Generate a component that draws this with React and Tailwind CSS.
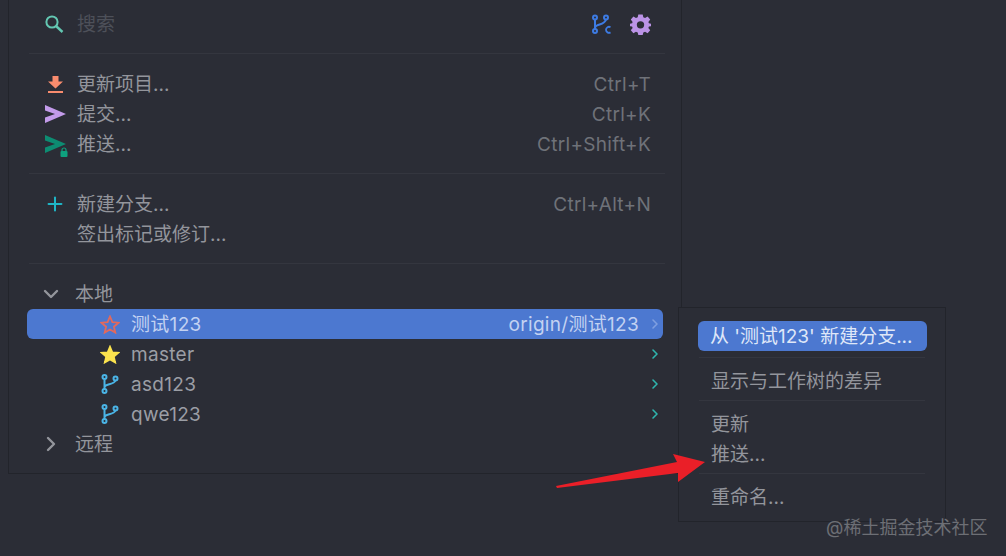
import React from 'react';
import { ChevronDown, ChevronRight, Plus } from 'lucide-react';

function SearchIcon() {
  return (
    <svg width="19" height="18" viewBox="0 0 19 18" fill="none" stroke="#63c7b2" strokeWidth="2">
      <circle cx="7" cy="7" r="5.6" />
      <path d="M11 11 L17.5 17" strokeWidth="2.4" />
    </svg>
  );
}

function Arrow({ className }) {
  return (
    <svg width="21" height="18" viewBox="0 0 21 18" className={className}>
      <path d="M0 0 L21 9 L0 18 V12.5 L10 9 L0 5.5 Z" fill="currentColor" />
    </svg>
  );
}

function UpdateIcon() {
  return (
    <svg width="15" height="17" viewBox="0 0 15 17" className="text-[#f98c6e] ml-[3px]">
      <path d="M4.5 0 H10.5 V5.5 H15 L7.5 12.5 L0 5.5 H4.5 Z" fill="currentColor" />
      <rect x="0" y="15" width="15" height="2" fill="currentColor" />
    </svg>
  );
}

function PushIcon() {
  return (
    <span className="relative flex w-[22px] h-[18px] text-[#0d8c72]">
      <Arrow />
      <svg width="8" height="10" viewBox="0 0 8 10" className="absolute left-[15px] top-[12px] text-[#0ea17e]">
        <path d="M2 4 V3 a2 2 0 0 1 4 0 V4" fill="none" stroke="currentColor" strokeWidth="1.2" />
        <rect x="0.5" y="4" width="7" height="6" rx="1" fill="currentColor" />
      </svg>
    </span>
  );
}

function BranchIcon() {
  return (
    <svg width="18" height="20" viewBox="0 0 18 20" fill="none" stroke="#4ab4e6" strokeWidth="2">
      <circle cx="3.5" cy="3" r="2" />
      <circle cx="3.5" cy="17" r="2" />
      <circle cx="14.5" cy="4.5" r="2" />
      <path d="M3.5 5 V15 M3.5 13 C4 9.5 13 11 14.5 6.5" />
    </svg>
  );
}

function Star({ outline }) {
  return (
    <svg width="20" height="19" viewBox="0 0 20 19">
      <path
        d="M10 1.5 L12.4 7.2 L18.6 7.7 L13.9 11.7 L15.3 17.6 L10 14.5 L4.7 17.6 L6.1 11.7 L1.4 7.7 L7.6 7.2 Z"
        fill={outline ? 'none' : '#fbe34e'}
        stroke={outline ? '#e2695c' : '#fbe34e'}
        strokeWidth={outline ? 1.8 : 1.6}
      />
    </svg>
  );
}

function GitFetchIcon() {
  return (
    <svg width="19" height="21" viewBox="0 0 19 21" fill="none" stroke="#3d7be3" strokeWidth="2">
      <circle cx="3" cy="3.5" r="2" />
      <circle cx="3" cy="17" r="2" />
      <circle cx="14" cy="3.5" r="2" />
      <path d="M3 5.5 V15 M3 13.5 C4 9.5 12.5 11.5 14 5.5" />
      <path d="M18.5 13.2 a3 3 0 1 0 0 5.2" strokeWidth="1.8" />
    </svg>
  );
}

function GearIcon() {
  return (
    <svg width="21" height="21" viewBox="0 0 24 24">
      <path
        fill="#bb93e6"
        fillRule="evenodd"
        d="M9.5 0.5 H14.5 L15.2 3.8 L17.2 4.7 L20.1 2.9 L23.1 6.4 L21 9 L21.6 10.6 L24 11 V14 L21.6 14.4 L21 16 L23.1 18.6 L20.1 22.1 L17.2 20.3 L15.2 21.2 L14.5 24 H9.5 L8.8 21.2 L6.8 20.3 L3.9 22.1 L0.9 18.6 L3 16 L2.4 14.4 L0 14 V11 L2.4 10.6 L3 9 L0.9 6.4 L3.9 2.9 L6.8 4.7 L8.8 3.8 Z M12 8.2 A4.2 4.2 0 1 0 12 16.6 A4.2 4.2 0 1 0 12 8.2 Z"
      />
    </svg>
  );
}

function Separator() {
  return <div className="ml-[20px] mr-[16px] h-px bg-[#34363f] mt-[14px] mb-[15px]" />;
}

function ActionRow({ icon, label, shortcut }) {
  return (
    <div className="flex items-center h-[30px] ml-[20px] mr-[30px]">
      <div className="w-[48px] flex pl-[16px] shrink-0 items-center">{icon}</div>
      <span className="pt-[2px] text-[#93959c]">{label}</span>
      {shortcut && <span className="pt-[2px] ml-auto text-[#6f7279] tracking-[0.3px]">{shortcut}</span>}
    </div>
  );
}

function BranchRow({ icon, name, remote, selected }) {
  return (
    <div
      className={
        'flex items-center h-[30px] ml-[18px] mr-[18px] pl-[72px] rounded-[6px] tracking-[0.3px] ' +
        (selected ? 'bg-[#4c78d0] text-[#c3d2f2]' : 'text-[#9b9ea5]')
      }
    >
      <div className="w-[22px] flex justify-center shrink-0">{icon}</div>
      <span className="pt-[2px] ml-[10px]">{name}</span>
      {remote && <span className="pt-[2px] ml-auto">{remote}</span>}
      <ChevronRight
        size={16}
        strokeWidth={2.4}
        className={(remote ? 'ml-[8px] ' : 'ml-auto ') + (selected ? 'text-[#7f9fe0]' : 'text-[#2fb5ad]')}
      />
    </div>
  );
}

function GroupRow({ open, label }) {
  const Icon = open ? ChevronDown : ChevronRight;
  return (
    <div className="flex items-center h-[30px] ml-[20px] text-[#93959c]">
      <div className="w-[46px] flex justify-center pr-[3px] shrink-0">
        <Icon size={24} strokeWidth={2.4} />
      </div>
      <span className="pt-[2px]">{label}</span>
    </div>
  );
}

function SubMenu() {
  const item = 'h-[30px] pl-[32px] pt-[2px] flex items-center text-[#93959c]';
  const sep = 'mx-[20px] h-px bg-[#34363f]';
  return (
    <div className="absolute left-[678px] top-[307px] w-[268px] h-[215px] bg-[#2b2d36] border border-[#22242b] pt-[13px]">
      <div className="ml-[19px] mr-[18px] h-[30px] pt-[2px] rounded-[6px] bg-[#4c78d0] text-[#dfe7f8] pl-[12px] flex items-center">
        从 '测试123' 新建分支...
      </div>
      <div className={sep + ' mt-[6px] mb-[8px]'} />
      <div className={item}>显示与工作树的差异</div>
      <div className={sep + ' mt-[4px] mb-[8px]'} />
      <div className={item}>更新</div>
      <div className={item}>推送...</div>
      <div className={sep + ' mt-[4px] mb-[8px]'} />
      <div className={item}>重命名...</div>
    </div>
  );
}

export default function App() {
  return (
    <div className="relative h-[556px] w-[1006px] overflow-hidden bg-[#2b2d36] text-[19px] font-['Inter','Noto_Sans_CJK_SC',sans-serif]">
      <div className="ml-[8px] w-[674px] h-[474px] pt-[9px] border-l border-r border-b border-[#22242b]">
        <div className="flex items-center h-[30px] ml-[20px] mr-[30px]">
          <div className="w-[48px] flex pl-[16px] shrink-0">
            <SearchIcon />
          </div>
          <span className="pt-[2px] text-[#4d5059]">搜索</span>
          <div className="ml-auto flex items-center gap-[19px]">
            <GitFetchIcon />
            <GearIcon />
          </div>
        </div>
        <Separator />
        <ActionRow icon={<UpdateIcon />} label="更新项目..." shortcut="Ctrl+T" />
        <ActionRow icon={<Arrow className="text-[#c39bea]" />} label="提交..." shortcut="Ctrl+K" />
        <ActionRow icon={<PushIcon />} label="推送..." shortcut="Ctrl+Shift+K" />
        <Separator />
        <ActionRow icon={<Plus size={22} strokeWidth={2.2} className="text-[#1fb5c6] -ml-[1px]" />} label="新建分支..." shortcut="Ctrl+Alt+N" />
        <ActionRow label="签出标记或修订..." />
        <Separator />
        <GroupRow open label="本地" />
        <BranchRow selected icon={<Star outline />} name="测试123" remote="origin/测试123" />
        <BranchRow icon={<Star />} name="master" />
        <BranchRow icon={<BranchIcon />} name="asd123" />
        <BranchRow icon={<BranchIcon />} name="qwe123" />
        <GroupRow label="远程" />
      </div>

      <SubMenu />

      <svg width="160" height="50" viewBox="0 0 160 50" className="absolute left-[550px] top-[450px]">
        <path d="M6 36 L127 12 L123 4 L155 12 L128 32 L128 23 L7 38 Z" fill="#ea1f28" />
      </svg>

      <div className="absolute left-[826px] top-[514px] text-[18px] text-[#6d6f75]">@稀土掘金技术社区</div>
    </div>
  );
}
